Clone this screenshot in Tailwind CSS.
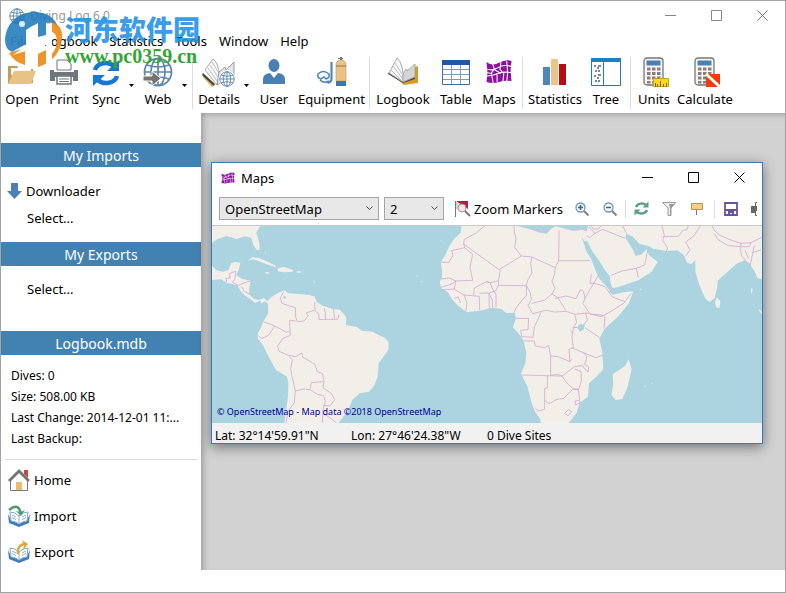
<!DOCTYPE html>
<html lang="en">
<head>
    <meta charset="UTF-8">
    <meta name="viewport" content="width=device-width, initial-scale=1.0">
    <title>Diving Log 6.0</title>
    <script src="https://cdn.jsdelivr.net/npm/@tailwindcss/browser@4"></script>
</head>
<body class="relative flex min-h-screen flex-col border border-[#a3a3a3] bg-white font-['Noto_Sans','Noto_Sans_CJK_SC',sans-serif] text-[13px] leading-5 text-black">
    <!-- Shared icons -->
    <svg class="hidden">
        <symbol id="globe" viewBox="0 0 30 30">
            <g fill="none" stroke="#5b87ad" stroke-width="1.7">
                <circle cx="15" cy="15" r="13.5"/>
                <ellipse cx="15" cy="15" rx="7" ry="13.5"/>
                <path d="M15 1v28M1 15h28M4 8q11 4 22 0M4 22q11-4 22 0"/>
            </g>
        </symbol>
        <symbol id="map" viewBox="0 0 28 26">
            <path fill="#8e10a0" d="M1 3q6 5 13 1t13-2l-1 10 1 11q-7-1-13 1T1 24l1-10z"/>
            <path fill="none" stroke="#fff" stroke-width="1.1" d="M0 10q7 3 13-1T28 8M0 18q8-1 13-3t15-1M7 4l2 6-3 5 2 10M16 3l-1 8 4 4-1 10M22 2l1 12-1 10M9 11l7 4M0 14l7 1M12 16v8"/>
        </symbol>
        <symbol id="calc" viewBox="0 0 22 30">
            <rect x="1" y="1" width="19" height="27" rx="3" fill="#f6f6f6" stroke="#777" stroke-width="1.3"/>
            <path fill="#4a7fb0" d="M3.500 3.500h14v5h-14z"/>
            <path fill="#8a7f7c" d="M4 10.500h3.500v3H4zm5 0h3.500v3H9zm5 0h3.500v3H14zM4 15h3.500v3H4zm5 0h3.500v3H9zm5 0h3.500v3H14zM4 19.500h3.500v3H4zm5 0h3.500v3H9zm5 0h3.500v3H14zM4 24h3.500v2.500H4zm5 0h3.500v2.500H9z"/>
        </symbol>
        <symbol id="book" viewBox="0 0 22 16">
            <path fill="#3f7cbd" d="M0 3l1 9 10 4 10-4 1-9-3 6-8 4-8-4z"/>
            <path fill="#fff" stroke="#7ca8cf" d="M2 1q5 0 9 4 4-4 9-4l-1 9q-4 0-8 3-4-3-8-3z"/>
            <path fill="none" stroke="#8fb0cc" d="M11 5v8M4 4l4 2M4 6.500l4 2M14 6l4-2M14 8.500l4-2"/>
        </symbol>
    </svg>

    <!-- Title bar -->
    <header>
        <div class="flex h-[29px] items-center pl-2 text-[#999]">
            <svg class="size-4" viewBox="0 0 30 30"><use href="#globe"/></svg>
            <h1 class="ml-[5px] flex-1 text-xs">Diving Log 6.0</h1>
            <div class="flex">
                <button class="flex w-[46px] justify-center" aria-label="Minimize"><svg class="size-[11px]" viewBox="0 0 11 11"><path stroke="#888" d="M0 5.500h11"/></svg></button>
                <button class="flex w-[46px] justify-center" aria-label="Maximize"><svg class="size-[11px]" viewBox="0 0 11 11"><path fill="none" stroke="#888" d="M.5.500h10v10H.5z"/></svg></button>
                <button class="flex w-[46px] justify-center" aria-label="Close"><svg class="size-[11px]" viewBox="0 0 11 11"><path stroke="#777" d="M.5.500l10 10m0-10l-10 10"/></svg></button>
            </div>
        </div>

        <!-- Menu -->
        <nav class="flex h-[22px] items-center gap-3 pl-[9px]">
            <button class="w-[22px] text-left text-[#999]">File</button>
            <button>Logbook</button>
            <button>Statistics</button>
            <button>Tools</button>
            <button>Window</button>
            <button>Help</button>
        </nav>

        <!-- Toolbar -->
        <div class="flex h-[61px] pt-[5px]" role="toolbar">
            <button class="flex w-[42px] flex-col items-center">
                <svg class="h-8 w-[30px]" viewBox="0 0 30 32"><path fill="#c49b57" d="M1 9h9l2 3h14v14H1z"/><path fill="#fff" d="M4 11h20v7H4z"/><path fill="#e9c286" d="M1 27l6-13h22l-5 13z"/></svg>
                <span>Open</span>
            </button>
            <button class="flex w-[42px] flex-col items-center">
                <svg class="h-8 w-[30px]" viewBox="0 0 30 32"><path fill="#fff" stroke="#6f767c" d="M8 13V3h10l4 4v6z"/><path fill="#6f767c" d="M1 13h4v2h20v-2h4v11h-5v-4H6v4H1z"/><path fill="#fff" stroke="#6f767c" stroke-width="1.500" d="M8 19h14v8H8z"/><path stroke="#6f767c" d="M10 22h10M10 24.500h10"/></svg>
                <span>Print</span>
            </button>
            <button class="flex w-[42px] flex-col items-center">
                <svg class="h-8 w-[30px]" viewBox="0 0 30 32"><path fill="none" stroke="#1478d8" stroke-width="4.500" d="M4 13a11 9 0 0 1 19-4M26 19a11 9 0 0 1-19 4"/><path fill="#1478d8" d="M28 3v11H16zM2 29V18h12z"/></svg>
                <span>Sync</span>
            </button>
            <button class="flex w-[9px] items-center justify-center" aria-label="Sync options"><svg class="h-[3px] w-[5px]" viewBox="0 0 5 3"><path d="M0 0h5L2.500 3z"/></svg></button>
            <button class="flex w-[44px] flex-col items-center">
                <svg class="h-8 w-[30px]" viewBox="0 0 30 32"><use href="#globe" width="30" height="30"/><path fill="#77736f" stroke="#fff" d="M0 19h9v-5l9 7.500L9 29v-5H0z"/></svg>
                <span>Web</span>
            </button>
            <button class="flex w-[9px] items-center justify-center" aria-label="Web options"><svg class="h-[3px] w-[5px]" viewBox="0 0 5 3"><path d="M0 0h5L2.500 3z"/></svg></button>
            <div class="mb-1 flex w-[7px] justify-center"><span class="w-px bg-[#dcdcdc]"></span></div>
            <button class="flex w-[46px] flex-col items-center">
                <svg class="h-8 w-[34px]" viewBox="0 0 34 32"><path fill="#d8a840" d="M2 18l10 10-2 2L1 20z"/><path fill="#444" d="M1 16l12 11-1 2L0 18z"/><path fill="#f7f7f7" stroke="#999" stroke-width=".8" d="M3 13L11 2q6 5 6 15l-2 11z"/><path fill="#e4e4e4" stroke="#888" stroke-width=".8" d="M17 15l6-5 1 3 8-8v14l-17 9z"/><path stroke="#aaa" stroke-width=".7" d="M8 8l8 12M6 11l9 13M10 5l7 11"/><circle cx="25" cy="22" r="8.500" fill="#fff"/><use href="#globe" x="17" y="14" width="16" height="16"/></svg>
                <span>Details</span>
            </button>
            <button class="flex w-[9px] items-center justify-center" aria-label="Details options"><svg class="h-[3px] w-[5px]" viewBox="0 0 5 3"><path d="M0 0h5L2.500 3z"/></svg></button>
            <button class="flex w-[46px] flex-col items-center">
                <svg class="h-8 w-6" viewBox="0 0 24 32"><ellipse cx="12" cy="8.500" rx="5.500" ry="6.500" fill="#4a7fb5"/><path fill="#4a7fb5" d="M1 27v-5q0-5 7-6l4 5 4-5q7 1 7 6v5z"/></svg>
                <span>User</span>
            </button>
            <button class="flex w-[69px] flex-col items-center">
                <svg class="h-8 w-[30px]" viewBox="0 0 30 32"><path fill="none" stroke="#4683b8" stroke-width="1.500" d="M1 17q5-5 11 0 1 4-3 5l-2-2-3 2q-4-1-3-5zM3 23q4 4 9 1"/><path fill="none" stroke="#5389ba" stroke-width="2.200" d="M14.500 5v17q0 3-4 4"/><path fill="#ecc283" stroke="#b99b70" stroke-width=".6" d="M19 8q0-5 5-5t5 5v16H19z"/><path fill="#777" d="M23 0h2v3h-2zM21 1h5v1h-5z"/><path stroke="#8d7552" d="M19 9h10"/><path fill="#40779d" d="M19 24h10v5H19z"/></svg>
                <span>Equipment</span>
            </button>
            <div class="mb-1 flex w-[7px] justify-center"><span class="w-px bg-[#dcdcdc]"></span></div>
            <button class="flex w-[60px] flex-col items-center">
                <svg class="h-8 w-8" viewBox="0 0 32 32"><path fill="#d99a26" d="M3 16l14 12 14-2V9l-3 1v11l-11 3L3 14z"/><path fill="#444" d="M1 17l15 9 12-4v-2l-12 4L2 15z"/><path fill="#f6f6f6" stroke="#999" stroke-width=".8" d="M2 16L10 1q7 6 6 24z"/><path fill="#d6d6d6" stroke="#999" stroke-width=".8" d="M16 25q-1-9 3-13l1 2 8-7v13z"/><path stroke="#aaa" stroke-width=".7" d="M8 6l7 11M6 9l9 12M4 13l10 10"/></svg>
                <span>Logbook</span>
            </button>
            <button class="flex w-[46px] flex-col items-center">
                <svg class="h-8 w-[30px]" viewBox="0 0 30 32"><path fill="#fff" stroke="#3c6ca8" d="M1.500 3.500h27v24h-27z"/><path fill="#2058a4" d="M1 3h28v5H1z"/><path stroke="#7d9cb8" d="M2 12.500h26M2 17.500h26M2 22.500h26M10.500 8v19M19.500 8v19"/></svg>
                <span>Table</span>
            </button>
            <button class="flex w-[40px] flex-col items-center">
                <svg class="h-8 w-7" viewBox="0 0 28 32"><use href="#map" y="2" width="28" height="25"/></svg>
                <span>Maps</span>
            </button>
            <div class="mb-1 flex w-[7px] justify-center"><span class="w-px bg-[#dcdcdc]"></span></div>
            <button class="flex w-[58px] flex-col items-center">
                <svg class="h-8 w-6" viewBox="0 0 24 32"><path fill="#4d86b8" d="M0 10h7v18H0z"/><path fill="#eac68a" d="M8 2h7v26H8z"/><path fill="#b80d10" d="M16 7h7v21h-7z"/></svg>
                <span>Statistics</span>
            </button>
            <button class="flex w-[44px] flex-col items-center">
                <svg class="h-8 w-[30px]" viewBox="0 0 30 32"><path fill="#fff" stroke="#1c7cb8" d="M.5 1.500h29v27H.5zM12.500 5v23"/><path fill="#1c80c4" d="M0 1h30v4H0z"/><path stroke="#467" stroke-width="1.500" d="M3 9h2m1 2h2m-1-2h3m-6 5h2m1 0h2M3 19h2m1 2h2m-1-3h3m-6 6h2m1 0h2"/></svg>
                <span>Tree</span>
            </button>
            <div class="mb-1 flex w-[5px] justify-center"><span class="w-px bg-[#dcdcdc]"></span></div>
            <button class="flex w-[42px] flex-col items-center">
                <svg class="h-8 w-[26px] translate-x-[2px]" viewBox="0 0 26 32"><use href="#calc" width="22" height="30"/><path fill="#fbd91c" stroke="#c7a50c" d="M10.500 21.500h15v8h-15z"/><path stroke="#806500" d="M12.500 30v-4m2 4v-3m3 3v-6m3 6v-3m3 3v-4"/></svg>
                <span>Units</span>
            </button>
            <button class="flex w-[60px] flex-col items-center">
                <svg class="h-8 w-[26px] translate-x-[2px]" viewBox="0 0 26 32"><use href="#calc" width="22" height="30"/><path fill="#f23a10" d="M12 17h14v13H12z"/><path stroke="#fff" stroke-width="3" d="M12 17l14 13"/></svg>
                <span>Calculate</span>
            </button>
        </div>
    </header>

    <main class="flex flex-1">
        <!-- Sidebar -->
        <aside class="w-[200px] shrink-0 pt-[30px]">
            <h2 class="h-6 bg-[#4182b2] text-center text-sm leading-[26px] text-white">My Imports</h2>
            <div class="flex h-[75px] flex-col items-start gap-[7px] pt-[14px]">
                <a href="#" class="flex items-center gap-1 pl-[6px]">
                    <svg class="h-4 w-[15px]" viewBox="0 0 15 16"><path fill="#4a80b8" d="M4 0h7v8h4l-7.500 8L0 8h4z"/></svg>
                    Downloader
                </a>
                <a href="#" class="pl-[26px]">Select...</a>
            </div>
            <h2 class="h-6 bg-[#4182b2] text-center text-sm leading-[26px] text-white">My Exports</h2>
            <div class="h-[65px] pt-[13px]">
                <a href="#" class="pl-[26px]">Select...</a>
            </div>
            <h2 class="h-6 bg-[#4182b2] text-center text-sm leading-[26px] text-white">Logbook.mdb</h2>
            <ul class="pt-[10px] pl-[10px] text-xs leading-[21px]">
                <li>Dives: 0</li>
                <li>Size: 508.00 KB</li>
                <li>Last Change: 2014-12-01 11:...</li>
                <li>Last Backup:</li>
            </ul>
            <nav class="mx-1 mt-[10px] flex flex-col gap-3 border-t border-[#d8d8d8] pt-2">
                <a href="#" class="flex items-center gap-1 pl-[3px]">
                    <svg class="h-6 w-[22px]" viewBox="0 0 22 24"><path fill="#cf4540" d="M16 2h4v8l-4-4z"/><path fill="#fff" stroke="#777" d="M2.500 11L11 3l8.500 8v11.500h-17z"/><path fill="none" stroke="#777376" stroke-width="3" d="M1 13L11 3l10 10"/><path fill="#e9bd72" d="M8 14h6v8H8z"/></svg>
                    Home
                </a>
                <a href="#" class="flex items-center gap-1 pl-[3px]">
                    <svg class="h-6 w-[22px]" viewBox="0 0 22 24"><use href="#book" y="7" width="22" height="16"/><path fill="none" stroke="#4d9b68" stroke-width="2.500" d="M1 6q10-8 12 4"/><path fill="#4d9b68" d="M8 7l5 5 4-6-4 2z"/></svg>
                    Import
                </a>
                <a href="#" class="flex items-center gap-1 pl-[3px]">
                    <svg class="h-6 w-[22px]" viewBox="0 0 22 24"><use href="#book" y="7" width="22" height="16"/><path fill="none" stroke="#d9a93c" stroke-width="2.500" d="M10 14q-1-10 8-10"/><path fill="#d9a93c" d="M14 0l6 4-5 6 1-5z"/></svg>
                    Export
                </a>
            </nav>
        </aside>

        <!-- Workspace -->
        <section class="relative mb-[22px] flex-1 bg-[#d2d2d2] shadow-[inset_4px_3px_6px_-2px_#999]">
            <!-- Maps window -->
            <div class="absolute top-[49px] right-[22px] left-[10px] overflow-hidden border border-[#2b7fbd] bg-white shadow-[0_3px_12px_#0007]">
                <div class="flex h-[29px] items-center pl-[9px]">
                    <svg class="h-3 w-[14px]" viewBox="0 0 28 26" preserveAspectRatio="none"><use href="#map"/></svg>
                    <h2 class="ml-[6px] flex-1">Maps</h2>
                    <button class="flex w-[46px] justify-center" aria-label="Minimize map"><svg class="size-[11px]" viewBox="0 0 11 11"><path stroke="#000" d="M0 5.500h11"/></svg></button>
                    <button class="flex w-[46px] justify-center" aria-label="Maximize map"><svg class="size-[11px]" viewBox="0 0 11 11"><path fill="none" stroke="#000" d="M.5.500h10v10H.5z"/></svg></button>
                    <button class="flex w-[46px] justify-center" aria-label="Close map"><svg class="size-[11px]" viewBox="0 0 11 11"><path stroke="#000" d="M.5.500l10 10m0-10l-10 10"/></svg></button>
                </div>
                <div class="flex h-[33px] items-center pl-[7px]">
                    <div class="relative">
                        <select aria-label="Map source" class="block h-[23px] w-[160px] appearance-none border border-[#a5a5a5] bg-[#e8e8e8] pl-[5px] leading-5"><option>OpenStreetMap</option></select>
                        <svg class="pointer-events-none absolute top-[9px] right-[6px] h-[5px] w-[7px]" viewBox="0 0 7 5"><path fill="none" stroke="#555" d="M.5.500l3 3 3-3"/></svg>
                    </div>
                    <div class="relative ml-[5px]">
                        <select aria-label="Zoom level" class="block h-[23px] w-[60px] appearance-none border border-[#a5a5a5] bg-[#e8e8e8] pl-[5px] leading-5"><option>2</option></select>
                        <svg class="pointer-events-none absolute top-[9px] right-[6px] h-[5px] w-[7px]" viewBox="0 0 7 5"><path fill="none" stroke="#555" d="M.5.500l3 3 3-3"/></svg>
                    </div>
                    <button class="ml-[11px] flex shrink-0 items-center gap-[3px]">
                        <svg class="size-4" viewBox="0 0 16 16"><path fill="#b71d3b" d="M1 0h12v8z"/><path fill="#e9ccd2" d="M1 0v8h8z"/><path stroke="#777" d="M.5 0v16"/><circle cx="7" cy="7" r="4" fill="#f4e4e6" stroke="#999"/><path stroke="#777" stroke-width="2" d="M10 10l5 5"/></svg>
                        Zoom Markers
                    </button>
                    <button class="ml-3 shrink-0" aria-label="Zoom in"><svg class="size-[14px]" viewBox="0 0 14 14"><circle cx="5.500" cy="5.500" r="4.500" fill="#f2f8fc" stroke="#7295ad" stroke-width="1.300"/><path stroke="#2f6591" stroke-width="1.500" d="M3 5.500h5M5.500 3v5"/><path stroke="#8b8077" stroke-width="2" d="M9 9l4.500 4.500"/></svg></button>
                    <button class="ml-[14px] shrink-0" aria-label="Zoom out"><svg class="size-[14px]" viewBox="0 0 14 14"><circle cx="5.500" cy="5.500" r="4.500" fill="#f2f8fc" stroke="#7295ad" stroke-width="1.300"/><path stroke="#2f6591" stroke-width="1.500" d="M3 5.500h5"/><path stroke="#8b8077" stroke-width="2" d="M9 9l4.500 4.500"/></svg></button>
                    <span class="mx-2 h-[18px] w-px bg-[#dcdcdc]"></span>
                    <button class="shrink-0" aria-label="Refresh"><svg class="size-[15px]" viewBox="0 0 30 30"><path fill="none" stroke="#5da184" stroke-width="5" d="M4 12a12 10 0 0 1 20-4M26 18a12 10 0 0 1-20 4"/><path fill="#5da184" d="M29 1v12H17zM1 29V17h12z"/></svg></button>
                    <button class="ml-[13px] shrink-0" aria-label="Filter"><svg class="size-[14px]" viewBox="0 0 14 14"><path fill="#eee" stroke="#999" d="M.5.500h13L9 6v7.500H6V6z"/><path fill="#999" d="M7 2h6L9 6v7H8V6z"/></svg></button>
                    <button class="ml-[15px] shrink-0" aria-label="Marker"><svg class="h-[13px] w-3" viewBox="0 0 12 13"><path fill="#f4d086" stroke="#b3935a" d="M.5 1.500h11v6H.5z"/><path stroke="#777" d="M5.500 8v5"/></svg></button>
                    <span class="mr-[9px] ml-[11px] h-[18px] w-px bg-[#dcdcdc]"></span>
                    <button class="shrink-0" aria-label="Save"><svg class="size-[14px]" viewBox="0 0 14 14"><path fill="#fff" stroke="#6a519c" stroke-width="1.800" d="M1 1h12v12H1z"/><path fill="#6a519c" d="M1 7h12v2H1zM4 9h6v5H8v-3H6v3H4z"/></svg></button>
                    <button class="ml-[13px] w-[6px] shrink-0 overflow-hidden" aria-label="Print map"><svg class="h-[14px] w-[14px]" viewBox="0 0 14 14"><path fill="#666" d="M0 4h14v7H0z"/><path fill="#fff" stroke="#666" d="M4.500.500h6v4h-6zM4.500 8.500h6v5h-6z"/></svg></button>
                </div>

                <!-- World map -->
                <div class="relative border-t border-[#c8c8c8] bg-[#abd4e0]">
                    <svg class="block h-[197px] w-full" viewBox="0 0 550 197" preserveAspectRatio="xMinYMin slice" aria-label="World map">
                        <!-- Americas -->
                        <g transform="translate(-7 -6) scale(.33333)" fill="#f2efe9">
                            <path d="M20 15H168L154 38 163 70 164 89 156 91 145 75 139 53 120 49 95 57 65 48 40 56 25 66 20 70z"/>
                            <path d="M20 136L35 151 54 155 70 150 78 130 90 126 106 128 101 150 94 165 110 176 136 182 133 203 132 222 146 236 160 241 177 234 187 244 198 232 220 218 238 211 250 220 281 222 314 225 329 230 335 246 353 257 381 266 405 269 424 292 423 315 455 321 470 332 502 335 540 354 551 367 550 390 533 413 521 430 518 470 507 498 492 515 464 520 442 540 430 570 414 592 400 610H238L243 570 249 530 250 486 246 470 213 450 188 404 174 376 158 355 159 338 168 323 175 304 190 280 189 252 180 244 171 250 164 242 151 249 140 240 119 226 107 213 97 196 66 189 49 178 20 180z"/>
                            <path d="M128 123L142 112 160 113 190 126 213 138 210 141 183 132 160 123 145 118zM218 145L238 141 266 151 261 156 236 157 219 154zM180 156l12 1 2 5-12-2zM276 154h12v4h-12zM178 94l6 6-2 2zM325 178l4 10-2 1zM634 165l4 3-2 2zM646 182l5 3-3 1z"/>
                            <path fill="none" stroke="#d3abd2" stroke-width="2.500" d="M65 187L63 175 75 174 74 160 92 154 90 177 83 187 100 197 114 190 136 183M109 200L119 215 138 224M236 215L226 234 230 249 253 258 271 263 272 292 277 305 297 303 310 287 303 279 330 270 329 246M330 272L342 282 341 298 361 299 361 278 358 265M361 298H398L402 284M386 267L388 297M272 303L254 301 256 346 233 356 218 378 222 394 248 405 271 410 291 399 293 411 330 433 337 455 353 461 357 485 354 503 380 521 389 539 375 558 354 556M175 305L208 317 243 336 254 335M209 318L192 345 170 356 161 347M252 408L262 420 257 445 260 463 271 513 297 507 315 509 319 488 354 485M315 509L337 523 355 527 361 542 354 570 352 608M271 513L268 548 249 575 243 608M355 582L371 590 394 608"/>
                            <path fill="#abd4e0" d="M235 228l6-1 2 8-7 2z"/>
                        </g>
                        <!-- Africa, Arabia and South Asia -->
                        <g transform="translate(213 -6) scale(.33333)" fill="#f2efe9">
                            <path d="M110 15L107 38 88 56 72 80 61 105 47 127 51 151 51 170 44 187 49 205 68 216 80 236 96 254 124 277 165 272 200 263 228 266 243 279 269 279 273 295 264 322 284 344 296 362 304 399 301 430 288 461 307 499 318 542 330 575 346 598 347 610H430L455 578 464 548 489 530 492 490 517 467 535 448 532 400 523 356 539 326 580 289 611 251 625 214 595 217 564 224 552 215 557 205 577 202 640 181 680 155 698 126 672 105 665 88 650 103 632 108 623 88 601 53 604 41 622 49 643 71 672 79 684 86 725 93 757 91 778 107 785 127 798 133 811 121 811 155 822 192 840 235 854 246 869 235 876 205 878 182 907 156 934 132 961 120 975 131 989 155 998 175 1013 178V15H490L485 34 470 29 445 33 412 24 391 19 378 27 365 41 345 38 319 29 278 18 275 15z"/>
                            <path d="M611 418L620 448 607 503 592 537 572 540 559 524 565 490 563 462 581 451 600 438zM875 231L886 244 884 263 875 264 870 249zM1001 266l12 12v7l-10-12zM979 203l4 5-3 13-2-5zM46 61l4 2-2 3zM55 65l5 1-3 2zM658 497l5 2-4 3zM679 488l4 2-3 2zM645 206l6 2-5 2z"/>
                            <path fill="#abd4e0" d="M470 50L478 63 487 64 500 91 521 120 540 151 554 168 557 190 563 207 555 213 543 197 522 175 511 150 500 120 484 93zM457 322L465 312 479 315 477 328 465 336z"/>
                            <path fill="none" stroke="#d3abd2" stroke-width="2.500" d="M181 16L152 40 118 58 116 72 120 83 80 92 84 106 72 127H47M116 72L222 149 289 108 269 82 273 55 268 35 267 16M402 32L401 122H496M289 108L320 111 391 143 401 122M320 111L317 132 321 159 308 181 304 197 220 196 221 182 226 149M119 83L143 103 135 142 143 181 92 183 81 192 48 202M48 177L73 174 92 183 88 208 117 225 126 249 122 277M48 210L88 207M88 236L99 230 107 249M117 225L142 227 163 229 164 271M146 225L148 204 184 185 196 188 220 182M163 220L192 219 193 266M184 185L195 188 203 208 213 223 213 263M193 219L213 212 220 196M192 219L202 240 203 265M304 197L305 225 292 240 273 264 266 279M304 197L316 219 319 239 309 256 323 281M321 250L359 240 381 222 390 205 381 184 389 162 391 143M323 281L362 271 389 276 424 274 450 283 482 279 494 280M381 222L398 232 423 272M390 235L423 228 453 236 466 209 475 213 480 235 495 209 509 185 521 164M480 235L474 250 495 282 540 286M272 295H311L309 329 287 331 290 350 324 352 328 321 341 293 348 277M297 363H327L331 378 359 383 371 376 377 408 399 410 435 425 432 388 445 383 441 350 445 323 455 307 449 283M445 323L457 322M445 342L437 332M440 383L475 398 512 413 535 405M480 323L524 353M482 279L487 300 475 315M475 398L486 410 479 433 491 441 489 456 480 448 473 437 450 439 411 468 398 463 377 466 377 408M432 427L440 418M290 465L398 468 411 468 423 486 443 505 461 508 469 483 468 455 450 447M367 468V504L359 506V568L340 573 331 565M359 540L372 551 396 538 415 536 443 508 460 509 465 548 452 555 450 543 462 541M419 580L430 569 440 575 429 588zM499 161L495 190 510 190 540 200 562 231 600 245 618 220M495 282L530 290 560 273 600 247M540 290L537 325M559 166L591 153 634 145 659 135 668 93M634 145L640 173M490 20L510 40 533 28 600 55M510 40L494 53 485 48M498 16L504 27 520 27 530 16M592 15L604 40M710 15L718 46 713 61 728 84 724 93M713 50L760 49 775 30 785 30 791 15M828 15L805 49 782 66 795 90 783 107M860 15L867 30 884 46 923 62 948 70 948 80 910 77 879 59 867 40M948 70L978 68 973 80 948 80M978 68L1010 52M945 82L950 109 962 120M960 91L970 115M988 77L983 100 976 135M982 98L1008 90"/>
                        </g>
                    </svg>
                    <p class="absolute bottom-[5px] left-[5px] font-['Noto_Sans',sans-serif] text-[9px] leading-3 text-[#000080]">© OpenStreetMap - Map data ©2018 OpenStreetMap</p>
                </div>
                <div class="flex h-5 items-center bg-[#f1f1f1] pt-[6px] pl-[3px] text-xs">
                    <span class="w-[136px]">Lat: 32°14'59.91"N</span>
                    <span class="w-[136px]">Lon: 27°46'24.38"W</span>
                    <span>0 Dive Sites</span>
                </div>
            </div>
        </section>
    </main>

    <!-- Site watermark -->
    <div class="pointer-events-none absolute top-[9px] left-[3px] flex items-start">
        <svg class="h-[60px] w-[61px]" viewBox="0 0 61 60">
            <path fill="#1976b8" fill-opacity=".85" d="M1 30C2 11 17 1 32 2q17 1 22 15-7-5-12-4v12l-8 2V13l-10 6v14L8 42q-7-3-7-12z"/>
            <path fill="#ef8a16" fill-opacity=".92" d="M46 12q13 2 12 16-2 22-24 29V44l8-4v10q14-12 10-24-2-6-10-3v-9zM5 43l16-5v17Q10 52 5 43z"/>
            <path fill="#fff" d="M22 20l8-5v15l12-4V14l6-1v41l-6 1V35l-12 4v17h-8V41L9 45q8-5 13-10z"/>
            <circle cx="18" cy="14" r="3" fill="#d9effa"/>
        </svg>
        <div class="pt-[2px] whitespace-nowrap">
            <p class="font-['Noto_Sans_CJK_SC',sans-serif] text-[27px] leading-[34px] font-black text-[#1e8fe8]/90">河东软件园</p>
            <p class="font-['Liberation_Serif',serif] text-[20px] leading-5 font-bold text-[#35a535]">www.pc0359.cn</p>
        </div>
    </div>
</body>
</html>
